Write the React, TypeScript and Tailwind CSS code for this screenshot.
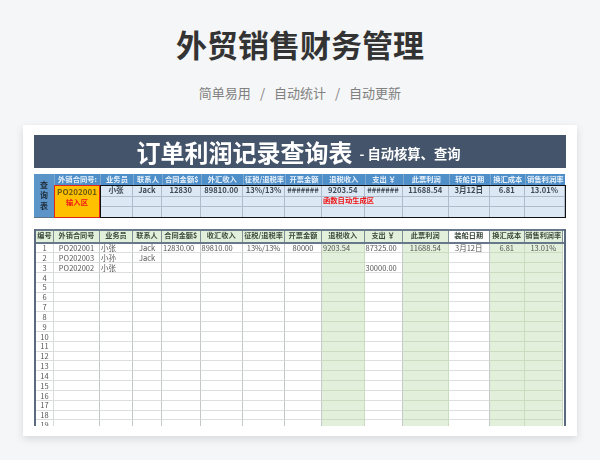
import React from 'react';

const queryCols = 'grid-cols-[20px_46px_33px_29px_38.5px_42.5px_42px_37px_42.5px_38px_46.5px_40.5px_35.5px_39.5px]';
// first and last column give up 2px to the thick side borders
const mainCols = 'grid-cols-[18px_46px_33px_29px_38.5px_42.5px_42px_37px_42.5px_38px_46.5px_40.5px_35.5px_37.5px]';

const queryHead = ['外销合同号:', '业务员', '联系人', '合同金额$', '外汇收入', '征税/退税率', '开票金额', '退税收入', '支出 ￥', '此票利润', '转船日期', '换汇成本', '销售利润率'];
const queryRow = ['小张', 'Jack', '12830', '89810.00', '13%/13%', '#######', '9203.54', '#######', '11688.54', '3月12日', '6.81', '13.01%'];

const head = ['编号', '外销合同号', '业务员', '联系人', '合同金额$', '收汇收入', '征税/退税率', '开票金额', '退税收入', '支出 ￥', '此票利润', '装船日期', '换汇成本', '销售利润率'];

// index of the columns with a green fill
const green = [8, 10, 12, 13];

const rows: Record<number, { text: string; align?: string }[]> = {
  1: [
    { text: 'PO202001' }, { text: '小张', align: 'text-left' }, { text: 'Jack' }, { text: '12830.00', align: 'text-left' },
    { text: '89810.00', align: 'text-left' }, { text: '13%/13%' }, { text: '80000' }, { text: '9203.54', align: 'text-left' },
    { text: '87325.00', align: 'text-left' }, { text: '11688.54' }, { text: '3月12日' }, { text: '6.81' }, { text: '13.01%' },
  ],
  2: [{ text: 'PO202003' }, { text: '小孙', align: 'text-left' }, { text: 'Jack' }],
  3: [
    { text: 'PO202002' }, { text: '小张', align: 'text-left' }, { text: '' }, { text: '' }, { text: '' }, { text: '' }, { text: '' }, { text: '' },
    { text: '30000.00', align: 'text-left' },
  ],
};

const QueryTable = () => (
  <div className={`relative mt-[6px] grid ${queryCols} grid-rows-[11px_11.5px_10px_11px] text-[7.3px] leading-none`}>
    <div className="row-span-4 flex flex-col items-center justify-center gap-[2.5px] border-b border-[#5f7386] bg-[#5b94c8] text-[8px] font-bold text-[#1f2d3a]">
      <span>查</span>
      <span>询</span>
      <span>表</span>
    </div>
    {queryHead.map((h) => (
      <div key={h} className="flex items-center justify-center whitespace-nowrap border-l border-[#7fa8cf] bg-[#4f8fc9] font-bold text-[#e8f2fb]">
        {h}
      </div>
    ))}
    <div className="col-start-2 row-span-3 row-start-2 flex flex-col items-center border-[1.5px] border-[#e0261c] bg-[#ffc000] pt-[1.5px]">
      <span className="text-[8px] font-bold text-[#6b5a10]">PO202001</span>
      <span className="mt-[3.5px] text-[7.3px] font-bold text-[#f01414]">输入区</span>
    </div>
    {queryRow.map((t, i) => (
      <div key={i} className="flex items-center justify-center whitespace-nowrap border-b border-r border-[#aebccb] bg-[#dce9f5] text-[7.6px] font-bold text-[#3f4a55]">
        {t}
      </div>
    ))}
    {[0, 1].map((r) =>
      queryRow.map((_, i) => (
        <div key={`${r}-${i}`} className="relative flex items-center border-b border-r border-[#aebccb] bg-[#dce9f5]">
          {r === 0 && i === 6 && (
            <span className="relative z-10 ml-px whitespace-nowrap font-bold text-[#f01414]">函数自动生成区</span>
          )}
        </div>
      )),
    )}
    {/* black frame over the result rows */}
    <div className="pointer-events-none absolute bottom-0 left-[66px] right-0 top-[11px] z-20 border-[1.5px] border-[#111111]" />
  </div>
);

const MainTable = () => (
  <div className="mt-[11px] h-[197px] overflow-hidden border-x-2 border-[#5a6b80] leading-none">
    <div className={`grid ${mainCols} h-[15px] border-y-2 border-[#66788a] text-[7.2px]`}>
      {head.map((h, i) => (
        <div
          key={h}
          className={`flex items-center justify-center whitespace-nowrap border-r border-[#7f8f96] font-bold text-[#3b4a3c] ${i === 11 ? 'bg-white' : 'bg-[#e2efda]'}`}
        >
          {h}
        </div>
      ))}
    </div>
    {Array.from({ length: 19 }, (_, n) => {
      const row = rows[n + 1] ?? [];
      return (
        <div key={n} className={`grid ${mainCols} h-[9.83px] text-[7.5px] text-[#555555]`}>
          <div className="flex items-center justify-center border-b border-r border-[#d8dcdc]">{n + 1}</div>
          {Array.from({ length: 13 }, (_, c) => {
            const cell = row[c];
            const isGreen = green.includes(c + 1);
            return (
              <div
                key={c}
                className={`flex items-center justify-center whitespace-nowrap border-b border-r ${isGreen ? 'border-[#c9dcc0] bg-[#e2efda]' : 'border-b-[#dddfdf] border-r-[#c4c8c8] bg-white'}`}
              >
                {cell && <span className={`w-full px-px ${cell.align ?? 'text-center'}`}>{cell.text}</span>}
              </div>
            );
          })}
        </div>
      );
    })}
  </div>
);

const App = () => {
  return (
    <div className="flex h-[460px] w-[600px] flex-col items-center overflow-hidden bg-[#f5f6f7] font-['Noto_Sans_CJK_SC',sans-serif]">
      <h1 className="mt-[22px] text-[31px] font-bold leading-[44px] text-[#333333]">外贸销售财务管理</h1>
      <p className="mt-[17px] flex gap-[9px] text-[13px] leading-[20px] text-[#808080]">
        <span>简单易用</span>
        <span>/</span>
        <span>自动统计</span>
        <span>/</span>
        <span>自动更新</span>
      </p>
      <div className="mt-[22px] h-[311px] w-[554px] bg-white px-[11px] pt-[10px] shadow-[0_3px_8px_rgba(0,0,0,0.12)]">
        <div className="blur-[0.3px]">
          <div className="flex h-[33px] items-center justify-center bg-[#44546a] pr-[3px] font-bold text-white">
            <span className="text-[24px] leading-none">订单利润记录查询表</span>
            <span className="ml-[7px] mt-[5px] text-[13.3px] font-bold leading-none">- 自动核算、查询</span>
          </div>
          <QueryTable />
          <MainTable />
        </div>
      </div>
    </div>
  );
};

export default App;
